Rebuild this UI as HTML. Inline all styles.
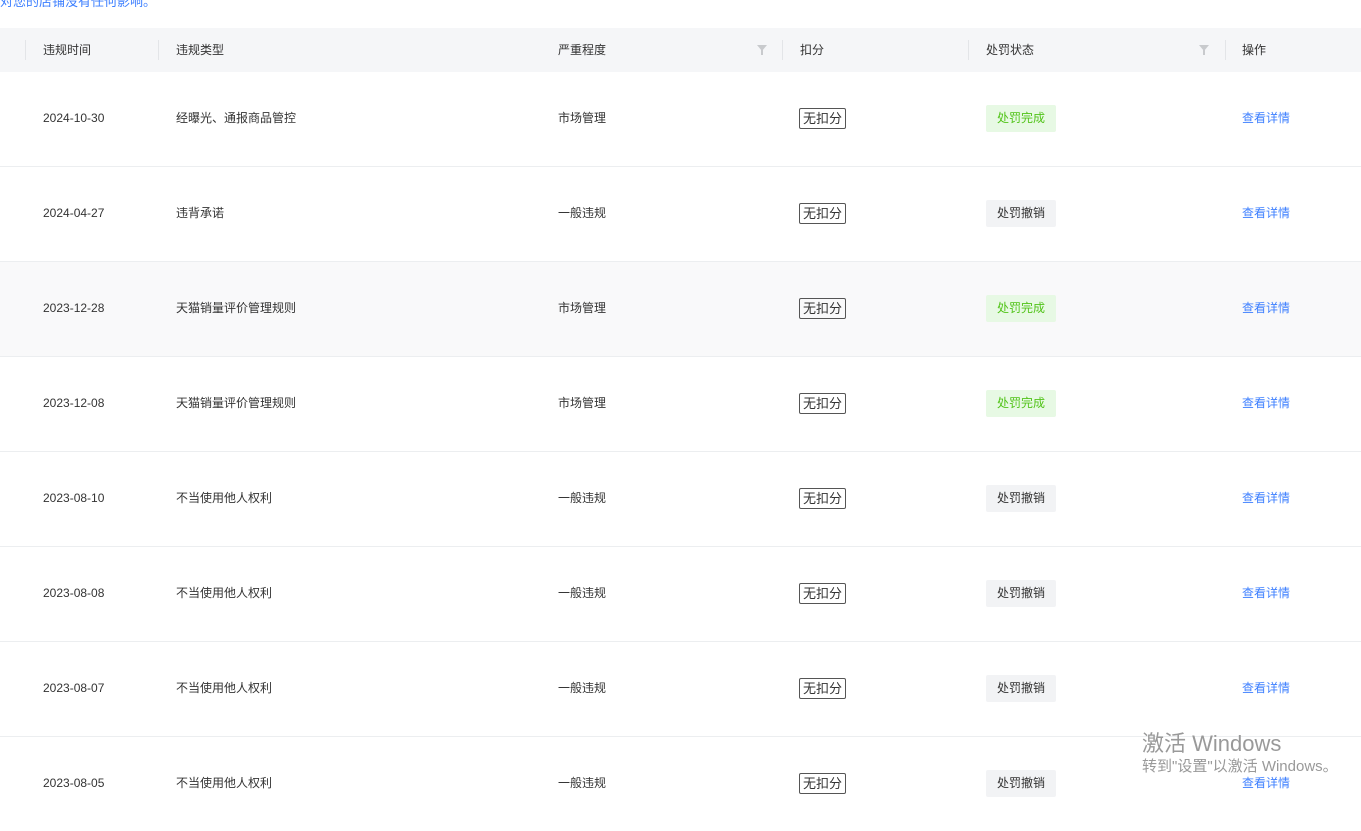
<!DOCTYPE html><html><head><meta charset="utf-8"><style>
body{margin:0;width:1361px;height:814px;overflow:hidden;background:#fff;font-family:"Liberation Sans","Noto Sans CJK SC",sans-serif;font-size:12px;color:#333;position:relative}
.top{position:absolute;left:0;top:-9px;color:#3d7fff;font-size:13px}
.hd{position:absolute;left:0;top:28px;width:1361px;height:44px;background:#f5f6f8}
.sep{position:absolute;top:12px;width:1px;height:20px;background:#e3e5e8}
.h{position:absolute;top:14px;line-height:16px;color:#333}
.f{position:absolute;top:17px;width:0;height:0;border-left:5px solid transparent;border-right:5px solid transparent;border-top:6px solid #c8cacd}
.f:after{content:"";position:absolute;left:-1px;top:-1px;width:2px;height:5px;background:#c8cacd}
.row{position:absolute;left:0;width:1361px;height:94px;border-bottom:1px solid #eceef0}
.c{position:absolute;top:38px;line-height:16px}
.b{position:absolute;top:36px;left:799px;border:1px solid #555;border-radius:2px;padding:2px 3px;line-height:15px;font-size:13px;color:#333}
.t{position:absolute;top:33px;left:986px;width:70px;height:27px;line-height:27px;text-align:center;border-radius:2px}
.g{background:#e7f9e4;color:#52c41a}.x{background:#f2f3f5;color:#333}
.a{position:absolute;top:38px;line-height:16px;left:1242px;color:#3d7fff}
.wm{position:absolute;left:1142px;top:726px;color:#999;font-size:22px}
.wm2{position:absolute;left:1142px;top:755px;color:#999;font-size:15px}
</style></head><body>
<div class="top">对您的店铺没有任何影响。</div>
<div class="hd">
<div class="sep" style="left:25px"></div><div class="h" style="left:43px">违规时间</div>
<div class="sep" style="left:158px"></div><div class="h" style="left:176px">违规类型</div>
<div class="h" style="left:558px">严重程度</div><div class="f" style="left:757px"></div>
<div class="sep" style="left:782px"></div><div class="h" style="left:800px">扣分</div>
<div class="sep" style="left:968px"></div><div class="h" style="left:986px">处罚状态</div><div class="f" style="left:1199px"></div>
<div class="sep" style="left:1225px"></div><div class="h" style="left:1242px">操作</div>
</div>
<div class="row" style="top:72px"><div class="c" style="left:43px">2024-10-30</div><div class="c" style="left:176px">经曝光、通报商品管控</div><div class="c" style="left:558px">市场管理</div><div class="b">无扣分</div><div class="t g">处罚完成</div><div class="a">查看详情</div></div>
<div class="row" style="top:167px"><div class="c" style="left:43px">2024-04-27</div><div class="c" style="left:176px">违背承诺</div><div class="c" style="left:558px">一般违规</div><div class="b">无扣分</div><div class="t x">处罚撤销</div><div class="a">查看详情</div></div>
<div class="row" style="top:262px;background:#f9f9fa"><div class="c" style="left:43px">2023-12-28</div><div class="c" style="left:176px">天猫销量评价管理规则</div><div class="c" style="left:558px">市场管理</div><div class="b">无扣分</div><div class="t g">处罚完成</div><div class="a">查看详情</div></div>
<div class="row" style="top:357px"><div class="c" style="left:43px">2023-12-08</div><div class="c" style="left:176px">天猫销量评价管理规则</div><div class="c" style="left:558px">市场管理</div><div class="b">无扣分</div><div class="t g">处罚完成</div><div class="a">查看详情</div></div>
<div class="row" style="top:452px"><div class="c" style="left:43px">2023-08-10</div><div class="c" style="left:176px">不当使用他人权利</div><div class="c" style="left:558px">一般违规</div><div class="b">无扣分</div><div class="t x">处罚撤销</div><div class="a">查看详情</div></div>
<div class="row" style="top:547px"><div class="c" style="left:43px">2023-08-08</div><div class="c" style="left:176px">不当使用他人权利</div><div class="c" style="left:558px">一般违规</div><div class="b">无扣分</div><div class="t x">处罚撤销</div><div class="a">查看详情</div></div>
<div class="row" style="top:642px"><div class="c" style="left:43px">2023-08-07</div><div class="c" style="left:176px">不当使用他人权利</div><div class="c" style="left:558px">一般违规</div><div class="b">无扣分</div><div class="t x">处罚撤销</div><div class="a">查看详情</div></div>
<div class="row" style="top:737px;border-bottom:none"><div class="c" style="left:43px">2023-08-05</div><div class="c" style="left:176px">不当使用他人权利</div><div class="c" style="left:558px">一般违规</div><div class="b">无扣分</div><div class="t x">处罚撤销</div><div class="a">查看详情</div></div>
<div class="wm">激活 Windows</div><div class="wm2">转到"设置"以激活 Windows。</div>
</body></html>
